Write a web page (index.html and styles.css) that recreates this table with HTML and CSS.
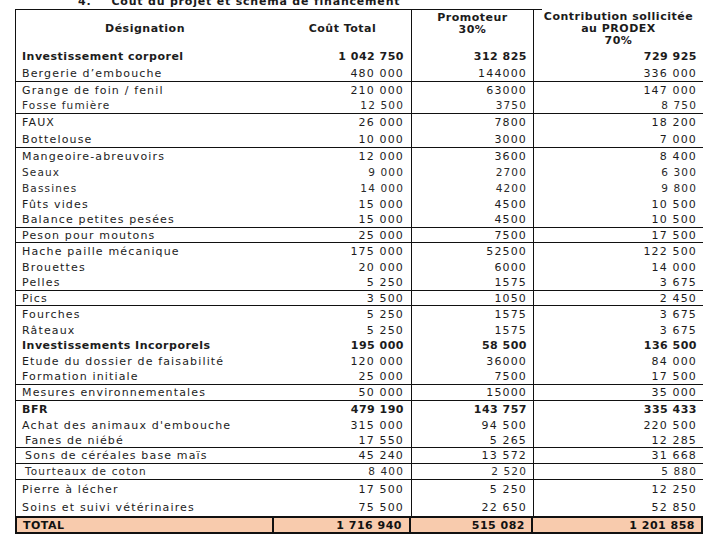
FILE: index.html
```html
<!DOCTYPE html>
<html lang="fr">
<head>
<meta charset="utf-8">
<title>Coût du projet et schéma de financement</title>
<link rel="stylesheet" href="styles.css">
</head>
<body>
<div class="page">
  <h1 class="title"><span class="num">4.</span><span>Coût du projet et schéma de financement</span></h1>
  <div class="table">
    <div class="row head">
      <div class="c c1 mid">Désignation</div>
      <div class="c c2 mid">Coût Total</div>
      <div class="c c3 top">Promoteur<br>30%</div>
      <div class="c c4 top">Contribution sollicitée<br>au PRODEX<br>70%</div>
    </div>
    <div class="row h18 b"><div class="c c1">Investissement corporel</div><div class="c c2">1 042 750</div><div class="c c3">312 825</div><div class="c c4">729 925</div></div>
    <div class="row h17 sep"><div class="c c1">Bergerie d’embouche</div><div class="c c2">480 000</div><div class="c c3">144000</div><div class="c c4">336 000</div></div>
    <div class="row"><div class="c c1">Grange de foin / fenil</div><div class="c c2">210 000</div><div class="c c3">63000</div><div class="c c4">147 000</div></div>
    <div class="row sep small"><div class="c c1">Fosse fumière</div><div class="c c2">12 500</div><div class="c c3">3750</div><div class="c c4">8 750</div></div>
    <div class="row h17"><div class="c c1">FAUX</div><div class="c c2">26 000</div><div class="c c3">7800</div><div class="c c4">18 200</div></div>
    <div class="row h17 sep"><div class="c c1">Bottelouse</div><div class="c c2">10 000</div><div class="c c3">3000</div><div class="c c4">7 000</div></div>
    <div class="row"><div class="c c1">Mangeoire-abreuvoirs</div><div class="c c2">12 000</div><div class="c c3">3600</div><div class="c c4">8 400</div></div>
    <div class="row small"><div class="c c1">Seaux</div><div class="c c2">9 000</div><div class="c c3">2700</div><div class="c c4">6 300</div></div>
    <div class="row small"><div class="c c1">Bassines</div><div class="c c2">14 000</div><div class="c c3">4200</div><div class="c c4">9 800</div></div>
    <div class="row"><div class="c c1">Fûts vides</div><div class="c c2">15 000</div><div class="c c3">4500</div><div class="c c4">10 500</div></div>
    <div class="row sep"><div class="c c1">Balance petites pesées</div><div class="c c2">15 000</div><div class="c c3">4500</div><div class="c c4">10 500</div></div>
    <div class="row h15 sep"><div class="c c1">Peson pour moutons</div><div class="c c2">25 000</div><div class="c c3">7500</div><div class="c c4">17 500</div></div>
    <div class="row"><div class="c c1">Hache paille mécanique</div><div class="c c2">175 000</div><div class="c c3">52500</div><div class="c c4">122 500</div></div>
    <div class="row"><div class="c c1">Brouettes</div><div class="c c2">20 000</div><div class="c c3">6000</div><div class="c c4">14 000</div></div>
    <div class="row sep"><div class="c c1">Pelles</div><div class="c c2">5 250</div><div class="c c3">1575</div><div class="c c4">3 675</div></div>
    <div class="row h15 sep"><div class="c c1">Pics</div><div class="c c2">3 500</div><div class="c c3">1050</div><div class="c c4">2 450</div></div>
    <div class="row"><div class="c c1">Fourches</div><div class="c c2">5 250</div><div class="c c3">1575</div><div class="c c4">3 675</div></div>
    <div class="row"><div class="c c1">Râteaux</div><div class="c c2">5 250</div><div class="c c3">1575</div><div class="c c4">3 675</div></div>
    <div class="row h15 b"><div class="c c1">Investissements Incorporels</div><div class="c c2">195 000</div><div class="c c3">58 500</div><div class="c c4">136 500</div></div>
    <div class="row"><div class="c c1">Etude du dossier de faisabilité</div><div class="c c2">120 000</div><div class="c c3">36000</div><div class="c c4">84 000</div></div>
    <div class="row sep"><div class="c c1">Formation initiale</div><div class="c c2">25 000</div><div class="c c3">7500</div><div class="c c4">17 500</div></div>
    <div class="row sep"><div class="c c1">Mesures environnementales</div><div class="c c2">50 000</div><div class="c c3">15000</div><div class="c c4">35 000</div></div>
    <div class="row b"><div class="c c1">BFR</div><div class="c c2">479 190</div><div class="c c3">143 757</div><div class="c c4">335 433</div></div>
    <div class="row"><div class="c c1">Achat des animaux d'embouche</div><div class="c c2">315 000</div><div class="c c3">94 500</div><div class="c c4">220 500</div></div>
    <div class="row h15 sep"><div class="c c1 ind">Fanes de niébé</div><div class="c c2">17 550</div><div class="c c3">5 265</div><div class="c c4">12 285</div></div>
    <div class="row sep"><div class="c c1 ind">Sons de céréales base maïs</div><div class="c c2">45 240</div><div class="c c3">13 572</div><div class="c c4">31 668</div></div>
    <div class="row sep small"><div class="c c1 ind">Tourteaux de coton</div><div class="c c2">8 400</div><div class="c c3">2 520</div><div class="c c4">5 880</div></div>
    <div class="row h18"><div class="c c1">Pierre à lécher</div><div class="c c2">17 500</div><div class="c c3">5 250</div><div class="c c4">12 250</div></div>
    <div class="row h18"><div class="c c1">Soins et suivi vétérinaires</div><div class="c c2">75 500</div><div class="c c3">22 650</div><div class="c c4">52 850</div></div>
    <div class="row total b"><div class="c c1">TOTAL</div><div class="c c2">1 716 940</div><div class="c c3">515 082</div><div class="c c4">1 201 858</div></div>
  </div>
</div>
</body>
</html>
```
FILE: styles.css
```css
html, body {
  margin: 0;
  padding: 0;
  background: #ffffff;
}
body {
  font-family: "DejaVu Sans", "Liberation Sans", sans-serif;
  color: #1c1c1c;
  font-size: 11px;
  letter-spacing: 1.15px;
  overflow: hidden;
  width: 720px;
  height: 540px;
}
.page {
  padding-left: 15px;
}
.title {
  margin: -4px 0 0 63px;
  height: 13px;
  font-size: 11px;
  font-weight: bold;
  letter-spacing: 0.8px;
  line-height: 12px;
  display: flex;
  gap: 20px;
}
.table {
  width: 688px;
}
.row {
  display: grid;
  grid-template-columns: 259px 137px 122px 170px;
  height: 16px;
  box-sizing: border-box;
}
.row.h15 { height: 15px; }
.row.h17 { height: 17px; }
.row.h18 { height: 18px; }
.row.sep {
  border-bottom: 1px solid #111;
}
.c {
  display: flex;
  align-items: center;
  justify-content: flex-end;
  box-sizing: border-box;
  white-space: nowrap;
  line-height: 13px;
}
.c1 {
  justify-content: flex-start;
  border-left: 1px solid #111;
  padding-left: 6px;
}
.c1.ind { padding-left: 9px; }
.c2 { padding-right: 7px; }
.c3 {
  border-left: 1px solid #111;
  padding-right: 6px;
}
.c4 {
  border-left: 1px solid #111;
  padding-right: 6px;
}
.small .c { font-size: 10.5px; color: #2a2a2a; }
.b .c {
  font-weight: bold;
  letter-spacing: 0.5px;
}

.head {
  height: 38px;
}
.head .c {
  font-weight: bold;
  letter-spacing: 0.5px;
  justify-content: center;
  text-align: center;
  padding: 0;
  line-height: 12px;
}
.head .c1, .head .c2, .head .c3 {
  border-top: 1px solid #111;
}
.head .c3 { position: relative; }
.head .c3::after {
  content: "";
  position: absolute;
  top: -1px;
  right: -9px;
  width: 9px;
  border-top: 1px solid #111;
}
.head .top {
  align-items: flex-start;
  padding-top: 2px;
}
.head .mid {
  align-items: center;
}

.total {
  height: 18px;
}
.total .c {
  background: #f8cbad;
  border-top: 2px solid #111;
  border-bottom: 2px solid #111;
  border-right: 2px solid #111;
  border-left: none;
  color: #111;
}
.total .c1 {
  border-left: 2px solid #111;
}
```
